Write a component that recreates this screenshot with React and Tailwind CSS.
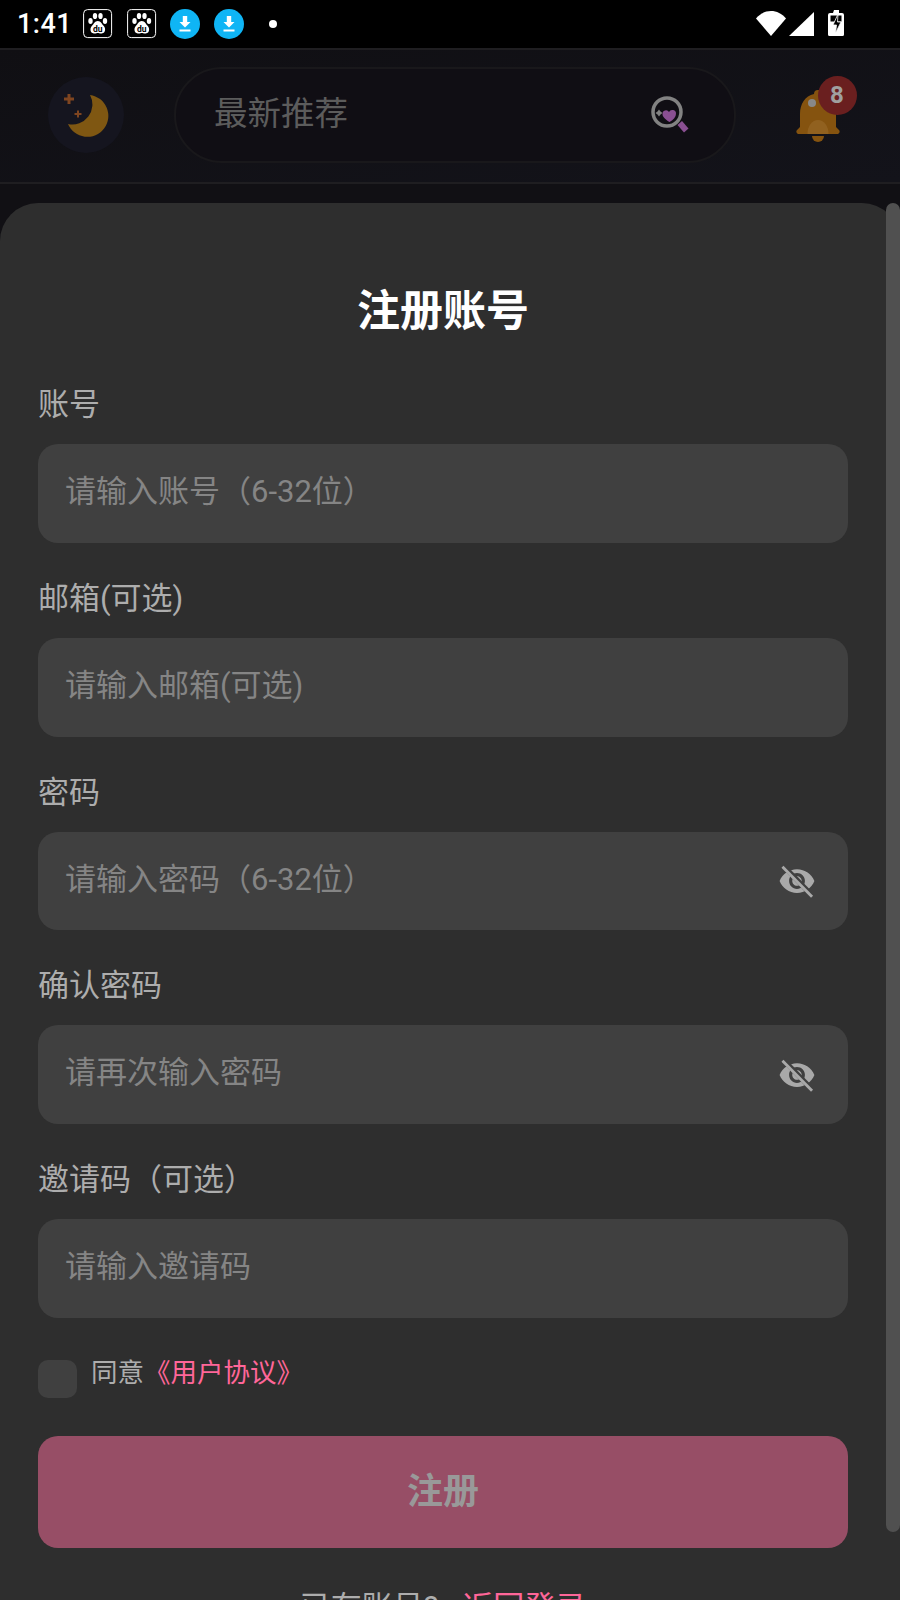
import React from 'react';

const cjk = { fontFamily: 'Roboto, "Noto Sans CJK SC", sans-serif' };

function BaiduIcon() {
  return (
    <svg width="30" height="30" viewBox="0 0 30 30">
      <rect x="0.600" y="0.600" width="28" height="28" rx="4" fill="#000" stroke="#fff" strokeWidth="1" />
      <ellipse cx="7.500" cy="12" rx="2.200" ry="3" fill="#fff" />
      <ellipse cx="12" cy="7" rx="2.200" ry="3.100" fill="#fff" />
      <ellipse cx="17.500" cy="7" rx="2.200" ry="3.100" fill="#fff" />
      <ellipse cx="22" cy="12" rx="2.200" ry="3" fill="#fff" />
      <path d="M14.800 12c-3 0-4 3-6 5-2 2-2 7 2 7.500 2 .2 3-.5 4-.5s2 .7 4 .5c4-.5 4-5.500 2-7.500-2-2-3-5-6-5z" fill="#fff" />
      <text x="14.800" y="22.500" textAnchor="middle" fontSize="8.500" fontWeight="700" fill="#000" fontFamily="Roboto, sans-serif">du</text>
    </svg>
  );
}

function DownloadBadge() {
  return (
    <svg width="30" height="30" viewBox="0 0 30 30">
      <circle cx="15" cy="15" r="15" fill="#0fb5f5" />
      <path d="M12.800 7h4.400v6h3.300L15 18.500 9.500 13h3.300z" fill="#fff" />
      <rect x="9.500" y="20.500" width="11" height="2" fill="#fff" />
    </svg>
  );
}

function StatusBar() {
  return (
    <div className="h-12 bg-black flex items-center pl-[17px] relative">
      <span className="text-white text-[27px] font-medium w-[66px] tracking-[0.5px]">1:41</span>
      <div className="flex items-center gap-[14px]">
        <BaiduIcon />
        <BaiduIcon />
        <div className="-ml-px flex items-center gap-[14px]">
          <DownloadBadge />
          <DownloadBadge />
        </div>
      </div>
      <div className="ml-[25px] w-2 h-2 rounded-full bg-white" />
      <div className="ml-auto mr-[54px] flex items-center">
        <svg width="90" height="30" viewBox="756 9 90 30">
          <path d="M756 18.500C764 8.500 778 8.500 786 18.500L771 36z" fill="#fff" />
          <path d="M789 36L814 12V36z" fill="#fff" />
          <path d="M834 10h5v3h3a2 2 0 0 1 2 2v19.500a1.500 1.500 0 0 1-1.500 1.500h-13a1.500 1.500 0 0 1-1.500-1.500V15a2 2 0 0 1 2-2h3z" fill="#fff" />
          <path d="M830.500 15.500h11v6h-11z" fill="#000" />
          <path d="M838 14l-5 11h3.500l-1 8 5.500-11h-3.500z" fill="#000" stroke="#fff" strokeWidth="0.800" />
        </svg>
      </div>
    </div>
  );
}

function Header() {
  return (
    <div className="h-[136px] flex items-center pl-12 pb-[3px] border-y-2 border-[#1f1e21] bg-gradient-to-br from-[#100f13] to-[#13131a]">
      <div className="w-[76px] h-[76px] rounded-full bg-[#15151f] shrink-0">
        <svg width="76" height="76" viewBox="48 77 76 76">
          <path d="M90 95A21 21 0 1 1 68 124A20 20 0 0 0 90 95z" fill="#7f5712" />
          <path d="M67.500 94h3v3.500H74v3h-3.500V104h-3v-3.500H64v-3h3.500z" fill="#7f4520" />
          <path d="M77 110.500h2v2.500h2.500v2H79v2.500h-2V115h-2.500v-2H77z" fill="#7f4520" />
        </svg>
      </div>
      <div className="ml-[50px] w-[562px] h-[96px] rounded-full border-2 border-[#19181b] bg-[#100e14] flex items-center pl-[38px] pr-[42px] shrink-0">
        <span className="text-[33.500px] text-[#5c5c5c]">最新推荐</span>
        <svg className="ml-auto" width="42" height="42" viewBox="650 94 42 42">
          <circle cx="667" cy="112" r="14" fill="none" stroke="#828282" strokeWidth="3.500" />
          <path d="M677.500 125l4.500-4 6.500 7.500-4.500 4z" fill="#8a4f92" />
          <path d="M669.500 122c-5-3-7-5.500-7-8a3.500 3.500 0 0 1 6.500-2 3.700 3.700 0 0 1 7 1.800c0 3.200-2.500 6-6.500 8.200z" fill="#8a4f92" />
          <path d="M659 109.500l1.500 2 2 1.500-2 1.500-1.500 2-1.500-2-2-1.500 2-1.500z" fill="#828282" />
        </svg>
      </div>
      <div className="ml-[59px] relative w-[46px] h-[60px] shrink-0 mt-[2px]">
        <svg width="46" height="60" viewBox="795 86 46 60">
          <path d="M814 94a4 4 0 0 1 8 0c9 2 14 10 14 20v13l3 3a2.500 2.500 0 0 1-1 4h-40a2.500 2.500 0 0 1-1-4l3-3v-13c0-10 5-18 14-20z" fill="#85530f" />
          <path d="M812 136h12a6 6 0 0 1-12 0z" fill="#85530f" />
          <circle cx="812" cy="103" r="4" fill="#888" />
          <path d="M807.500 134a10.500 14 0 0 1 21 0z" fill="#a87a40" opacity="0.350" />
        </svg>
        <div className="absolute left-[22.500px] top-[-10px] w-[39px] h-[39px] rounded-full bg-[#6a1f1f] flex items-center justify-center text-[24px] font-bold text-[#a0a0a0]">8</div>
      </div>
    </div>
  );
}

function EyeOff() {
  return (
    <svg width="38" height="38" viewBox="0 0 24 24">
      <path
        fillRule="evenodd"
        d="M12 4.500C7 4.500 2.730 7.610 1 12c1.730 4.390 6 7.500 11 7.500s9.270-3.110 11-7.500c-1.730-4.390-6-7.500-11-7.500zM12 17c-2.760 0-5-2.240-5-5s2.240-5 5-5 5 2.240 5 5-2.240 5-5 5zm0-8c-1.660 0-3 1.340-3 3s1.340 3 3 3 3-1.340 3-3-1.340-3-3-3z"
        fill="#a9a9a9"
      />
      <path d="M3.500 2.500L21 20.500" stroke="#404040" strokeWidth="3.200" />
      <path d="M2.800 3L21.500 22" stroke="#a9a9a9" strokeWidth="1.800" />
    </svg>
  );
}

function Field({ label, placeholder, secret }) {
  return (
    <div className="mt-9 first:mt-0">
      <div className="h-10 leading-10 text-[31px] text-[#adadad] mb-[19px]">{label}</div>
      <div className="h-[98.750px] rounded-[20px] bg-[#404040] flex items-center justify-between pl-[27px] pr-[32px]">
        <span className="text-[31px] text-[#858585] -mt-[2px]">{placeholder}</span>
        {secret && <EyeOff />}
      </div>
    </div>
  );
}

export default function App() {
  return (
    <div className="relative w-[900px] h-[1600px] overflow-hidden bg-[#111014] [text-spacing-trim:space-all]" style={cjk}>
      <StatusBar />
      <Header />
      <div className="mt-[19px] h-[1500px] rounded-t-[38px] bg-[#2e2e2e] px-[38px] pr-[52px]">
        <h1 className="pt-[78px] h-[137px] leading-[60px] text-center text-[43px] font-bold text-white">注册账号</h1>
        <div className="mt-[45px]">
          <Field label="账号" placeholder="请输入账号（6-32位）" />
          <Field label="邮箱(可选)" placeholder="请输入邮箱(可选)" />
          <Field label="密码" placeholder="请输入密码（6-32位）" secret />
          <Field label="确认密码" placeholder="请再次输入密码" secret />
          <Field label="邀请码（可选）" placeholder="请输入邀请码" />
        </div>
        <div className="mt-[42px] flex items-start">
          <div className="w-[39px] h-[38px] rounded-[10px] bg-[#404040]" />
          <div className="ml-[14px] -mt-[5px] text-[26.500px] leading-9 text-[#adadad]">
            同意<span className="text-[#ff6699]">《用户协议》</span>
          </div>
        </div>
        <button className="mt-[38px] w-full h-[112px] rounded-[20px] bg-[#974e66] text-[36px] font-bold text-[#999999]">注册</button>
        <div className="mt-[42px] text-center text-[31px] leading-9 text-[#adadad]">
          已有账号?<span className="ml-6 text-[#ff6699]">返回登录</span>
        </div>
      </div>
      <div className="absolute left-[886px] top-[203px] w-[14px] h-[1329px] rounded-[7px] bg-[#505050]" />
    </div>
  );
}
